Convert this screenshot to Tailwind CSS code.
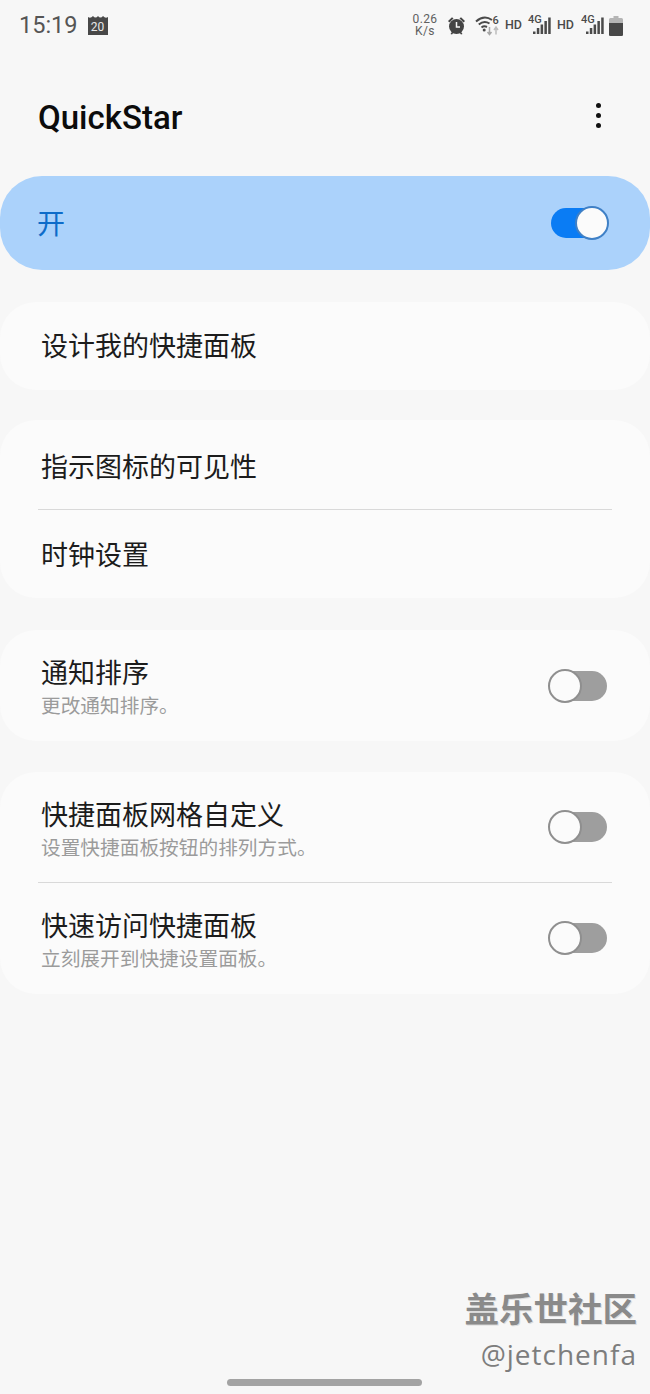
<!DOCTYPE html>
<html lang="zh-CN">
<head>
    <meta charset="UTF-8">
    <meta name="viewport" content="width=device-width, initial-scale=1.0">
    <title>QuickStar</title>
    <script src="https://cdn.jsdelivr.net/npm/@tailwindcss/browser@4"></script>
</head>
<body class="bg-[#f7f7f7] font-['Roboto','Noto_Sans_CJK_SC',sans-serif]">
<div class="relative w-[650px] h-[1394px] overflow-hidden">

    <!-- status bar -->
    <div class="h-[50px] flex items-center pl-[19px] pr-[27px] text-[#555555]">
        <span class="text-[23.5px] leading-none pt-[2px]">15:19</span>
        <div class="relative ml-[10px] w-[20px] h-[20px]">
            <svg width="20" height="20" viewBox="0 0 20 20"><path d="M0 2 Q2.5 4 5 1 Q7.5 4 10 1 Q12.5 4 15 1 Q17.5 4 20 2 V20 H0 Z" fill="#484848"/></svg>
            <span class="absolute inset-x-0 top-[6px] text-center text-[12px] leading-none text-[#e8e8e8]">20</span>
        </div>
        <div class="ml-auto flex items-center">
            <div class="w-[26px] text-center text-[12px] tracking-[0.4px] leading-[12px] text-[#606060]">0.26<br>K/s</div>
            <svg class="ml-[9px]" width="19" height="19" viewBox="0 0 19 19" fill="#444444"><circle cx="9.5" cy="10.5" r="7.5"/><path d="M1 5 L5 1.2 L6.5 2.6 L2.4 6.6 Z M18 5 L14 1.2 L12.5 2.6 L16.6 6.6 Z M3.5 18 L5.5 15 L7 16 L5 18.6 Z M15.5 18 L13.5 15 L12 16 L14 18.6 Z"/><path d="M9.5 6 V11 H13" fill="none" stroke="#f7f7f7" stroke-width="1.5"/></svg>
            <svg class="ml-[9px]" width="26" height="22" viewBox="0 0 26 22" fill="none"><g stroke="#4a4a4a" stroke-width="2"><path d="M1 7.5 Q9 0.5 17 6"/><path d="M3.8 10.5 Q9 6 14.5 9.5"/><path d="M6.5 13.5 Q9 11.5 12 13"/></g><circle cx="9.2" cy="16" r="1.5" fill="#4a4a4a"/><text x="17.5" y="10" font-size="11" font-weight="500" fill="#4a4a4a" font-family="Roboto">6</text><path d="M14.5 13 V20 M12.5 18 L14.5 20.5 L16.5 18" stroke="#a8a8a8" stroke-width="1.5"/><path d="M21 20.5 V13.5 M19 16 L21 13 L23 16" stroke="#bdbdbd" stroke-width="1.5"/></svg>
            <span class="ml-[4px] w-[16px] text-[12.5px] leading-none font-medium text-[#4a4a4a]">HD</span>
            <svg class="ml-[7px] overflow-visible" width="23" height="22" viewBox="0 0 23 22"><text x="0" y="9" font-size="11" font-weight="500" fill="#4a4a4a" font-family="Roboto">4G</text><g fill="#4a4a4a"><rect x="5" y="17.5" width="2.5" height="2.5"/><rect x="8.8" y="14" width="2.5" height="6"/><rect x="12.6" y="10.5" width="2.5" height="9.5"/><rect x="16.4" y="7" width="2.5" height="13"/><rect x="20.2" y="3.5" width="2.5" height="16.5"/></g></svg>
            <span class="ml-[6px] w-[17px] text-[12.5px] leading-none font-medium text-[#4a4a4a]">HD</span>
            <svg class="ml-[7px] overflow-visible" width="23" height="22" viewBox="0 0 23 22"><text x="0" y="9" font-size="11" font-weight="500" fill="#4a4a4a" font-family="Roboto">4G</text><g fill="#4a4a4a"><rect x="5" y="17.5" width="2.5" height="2.5"/><rect x="8.8" y="14" width="2.5" height="6"/><rect x="12.6" y="10.5" width="2.5" height="9.5"/><rect x="16.4" y="7" width="2.5" height="13"/><rect x="20.2" y="3.5" width="2.5" height="16.5"/></g></svg>
            <svg class="ml-[5px]" width="14" height="21" viewBox="0 0 14 21"><path d="M4.5 1 H9.5 V3 H12.5 Q14 3 14 4.5 V19.5 Q14 21 12.5 21 H1.5 Q0 21 0 19.5 V4.5 Q0 3 1.5 3 H4.5 Z" fill="#b5b5b5"/><path d="M0 8 H14 V19.5 Q14 21 12.5 21 H1.5 Q0 21 0 19.5 Z" fill="#484848"/></svg>
        </div>
    </div>

    <!-- header -->
    <div class="h-[126px] flex items-center justify-between pl-[38px] pr-[49px]">
        <h1 class="text-[33px] leading-none font-medium text-[#0c0c0c] mt-[9px]">QuickStar</h1>
        <div class="flex flex-col gap-[5px] mt-[4px]">
            <span class="w-[5px] h-[5px] rounded-full bg-[#111111]"></span>
            <span class="w-[5px] h-[5px] rounded-full bg-[#111111]"></span>
            <span class="w-[5px] h-[5px] rounded-full bg-[#111111]"></span>
        </div>
    </div>

    <!-- master switch -->
    <div class="h-[94px] rounded-[42px] bg-[#abd2fb] flex items-center justify-between pl-[37px] pr-[43px]">
        <span class="text-[28px] leading-none text-[#0e6cc9] pt-[4px]">开</span>
        <div class="relative w-[56px] h-[30px] rounded-full bg-[#0a7cf4]">
            <span class="absolute -right-[2px] -top-[2px] w-[34px] h-[34px] rounded-full bg-[#fbfbfb] border-2 border-[#3f80c6]"></span>
        </div>
    </div>

    <div class="mt-[32px] h-[88px] rounded-[36px] bg-[#fbfbfb] flex items-center pl-[41px] pt-[3px] text-[27px] leading-none text-[#1c1c1c]">设计我的快捷面板</div>

    <div class="mt-[30px] h-[178px] rounded-[36px] bg-[#fbfbfb] flex flex-col">
        <div class="h-[89px] flex items-center pl-[41px] text-[27px] leading-none text-[#1c1c1c] pt-[8px]">指示图标的可见性</div>
        <div class="mx-[38px] h-px bg-[#d9d9d9]"></div>
        <div class="flex-1 flex items-center pl-[41px] pt-[4px] text-[27px] leading-none text-[#1c1c1c]">时钟设置</div>
    </div>

    <div class="mt-[32px] h-[111px] rounded-[36px] bg-[#fbfbfb] flex items-center justify-between pl-[41px] pr-[43px]">
        <div class="pt-[5px]">
            <div class="text-[27px] leading-[34px] text-[#1c1c1c]">通知排序</div>
            <div class="mt-[3px] text-[19.7px] leading-[26px] text-[#9b9b9b]">更改通知排序。</div>
        </div>
        <div class="relative w-[58px] h-[30px] rounded-full bg-[#9e9e9e]">
            <span class="absolute -left-[1px] -top-[2px] w-[34px] h-[34px] rounded-full bg-[#fbfbfb] border-2 border-[#8f8f8f]"></span>
        </div>
    </div>

    <div class="mt-[31px] h-[222px] rounded-[36px] bg-[#fbfbfb] flex flex-col">
        <div class="h-[110px] flex items-center justify-between pl-[41px] pr-[43px]">
            <div class="pt-[7px]">
                <div class="text-[27px] leading-[34px] text-[#1c1c1c]">快捷面板网格自定义</div>
                <div class="mt-[3px] text-[19.7px] leading-[26px] text-[#9b9b9b]">设置快捷面板按钮的排列方式。</div>
            </div>
            <div class="relative w-[58px] h-[30px] rounded-full bg-[#9e9e9e]">
                <span class="absolute -left-[1px] -top-[2px] w-[34px] h-[34px] rounded-full bg-[#fbfbfb] border-2 border-[#8f8f8f]"></span>
            </div>
        </div>
        <div class="mx-[38px] h-px bg-[#d9d9d9]"></div>
        <div class="flex-1 flex items-center justify-between pl-[41px] pr-[43px]">
            <div class="pt-[5px]">
                <div class="text-[27px] leading-[34px] text-[#1c1c1c]">快速访问快捷面板</div>
                <div class="mt-[3px] text-[19.7px] leading-[26px] text-[#9b9b9b]">立刻展开到快捷设置面板。</div>
            </div>
            <div class="relative w-[58px] h-[30px] rounded-full bg-[#9e9e9e] -mt-[2px]">
                <span class="absolute -left-[1px] -top-[2px] w-[34px] h-[34px] rounded-full bg-[#fbfbfb] border-2 border-[#8f8f8f]"></span>
            </div>
        </div>
    </div>

    <!-- watermark -->
    <div class="absolute right-[13px] top-[1290px] text-right">
        <div class="text-[34.5px] leading-[40px] font-bold text-[#8a8a8a] [text-shadow:1px_1px_0_#dddddd]">盖乐世社区</div>
        <div class="text-[28px] leading-[32px] mt-[8px] tracking-[1px] text-[#7d7d7d] font-['Open_Sans',sans-serif]">@jetchenfa</div>
    </div>

    <!-- home indicator -->
    <div class="absolute left-[227px] top-[1379px] w-[195px] h-[7px] rounded-full bg-[#a3a3a3]"></div>
</div>
</body>
</html>
